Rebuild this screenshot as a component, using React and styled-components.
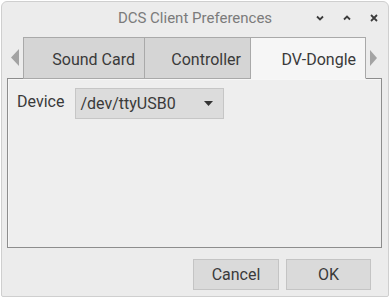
import React from 'react';
import styled, { createGlobalStyle } from 'styled-components';

const GlobalStyle = createGlobalStyle`
  body {
    margin: 0;
    background: #ffffff;
    font-family: Roboto, "Liberation Sans", sans-serif;
  }
`;

const tabs = [
  { label: 'Sound Card', width: 122 },
  { label: 'Controller', width: 106 },
  { label: 'DV-Dongle', width: 115, active: true },
];

const App = () => (
  <>
    <GlobalStyle />
    <Window>
      <TitleBar>
        <span />
        <Title>DCS Client Preferences</Title>
        <Controls>
          <ControlIcon viewBox="0 0 8 8">
            <path d="M1 2.5 L4 5.5 L7 2.5" />
          </ControlIcon>
          <ControlIcon viewBox="0 0 8 8">
            <path d="M1 5.5 L4 2.5 L7 5.5" />
          </ControlIcon>
          <ControlIcon viewBox="0 0 8 8">
            <path d="M1 1 L7 7 M7 1 L1 7" />
          </ControlIcon>
        </Controls>
      </TitleBar>

      <TabRow>
        <Arrow viewBox="0 0 8 17">
          <path d="M8 0 L0 8.5 L8 17 Z" />
        </Arrow>
        <Tabs>
          {tabs.map((t) => (
            <Tab key={t.label} $active={t.active} $width={t.width}>
              {t.label}
            </Tab>
          ))}
        </Tabs>
        <Arrow viewBox="0 0 7 16" $right>
          <path d="M0 0 L7 8 L0 16 Z" />
        </Arrow>
      </TabRow>

      <Panel>
        <Row>
          <Label>Device</Label>
          <Combo>
            <span>/dev/ttyUSB0</span>
            <svg width="9" height="5" viewBox="0 0 9 5">
              <path d="M0 0 H9 L4.5 5 Z" fill="#333" />
            </svg>
          </Combo>
        </Row>
      </Panel>

      <Footer>
        <Button $width={86}>Cancel</Button>
        <Button $width={85}>OK</Button>
      </Footer>
    </Window>
  </>
);

const Window = styled.div`
  margin: 1px 1px 0 1px;
  width: 388px;
  height: 296px;
  box-sizing: border-box;
  background: #ececec;
  border: 1px solid #cfcfcf;
  border-radius: 6px 6px 2px 2px;
  display: flex;
  flex-direction: column;
`;

const TitleBar = styled.div`
  height: 34px;
  display: grid;
  grid-template-columns: 1fr auto 1fr;
  align-items: center;
`;

const Title = styled.div`
  font-size: 15px;
  color: #7b7b7b;
  margin-top: -2px;
`;

const Controls = styled.div`
  display: flex;
  justify-content: flex-end;
  gap: 19px;
  padding-right: 10px;
  margin-top: -2px;
`;

const ControlIcon = styled.svg`
  width: 8px;
  height: 8px;
  fill: none;
  stroke: #3c3c3c;
  stroke-width: 1.8;
`;

const TabRow = styled.div`
  display: flex;
  align-items: center;
  height: 43px;
  padding-left: 9px;
  position: relative;
  z-index: 1;
  margin-bottom: -1px;
`;

const Arrow = styled.svg`
  width: ${(p) => (p.$right ? 7 : 8)}px;
  height: ${(p) => (p.$right ? 16 : 17)}px;
  fill: #a3a3a3;
  margin: ${(p) => (p.$right ? '0 0 0 4px' : '0 4px 0 0')};
`;

const Tabs = styled.div`
  display: flex;
  align-self: flex-end;
  height: 42px;
`;

const Tab = styled.div`
  width: ${(p) => p.$width}px;
  box-sizing: border-box;
  display: flex;
  align-items: center;
  justify-content: flex-end;
  padding: 2px 9px 0 0;
  font-size: 16px;
  color: #3a3a3a;
  background: ${(p) => (p.$active ? '#f6f6f6' : '#d5d5d5')};
  border: 1px solid #a9a9a9;
  border-bottom: ${(p) => (p.$active ? '1px solid #f6f6f6' : '1px solid #a9a9a9')};
  & + & {
    border-left: none;
  }
`;

const Panel = styled.div`
  margin: 0 6px 0 5px;
  height: 170px;
  box-sizing: border-box;
  border: 1px solid #8d8d8d;
  background: #eeeeee;
  box-shadow: inset 1px 1px 0 #f7f7f7;
  padding: 9px 9px;
`;

const Row = styled.div`
  display: flex;
  align-items: center;
  gap: 11px;
`;

const Label = styled.div`
  font-size: 16px;
  color: #3a3a3a;
  margin-top: -5px;
`;

const Combo = styled.div`
  width: 149px;
  height: 31px;
  box-sizing: border-box;
  background: #dcdcdc;
  border: 1px solid #c6c6c6;
  display: flex;
  align-items: center;
  justify-content: space-between;
  padding: 0 10px 0 4px;
  font-size: 16px;
  color: #3a3a3a;
`;

const Footer = styled.div`
  display: flex;
  justify-content: flex-end;
  gap: 7px;
  padding: 11px 17px 0 0;
`;

const Button = styled.div`
  width: ${(p) => p.$width}px;
  height: 31px;
  box-sizing: border-box;
  background: #dadada;
  border: 1px solid #c4c4c4;
  display: flex;
  align-items: center;
  justify-content: center;
  font-size: 16px;
  color: #3a3a3a;
`;

export default App;
